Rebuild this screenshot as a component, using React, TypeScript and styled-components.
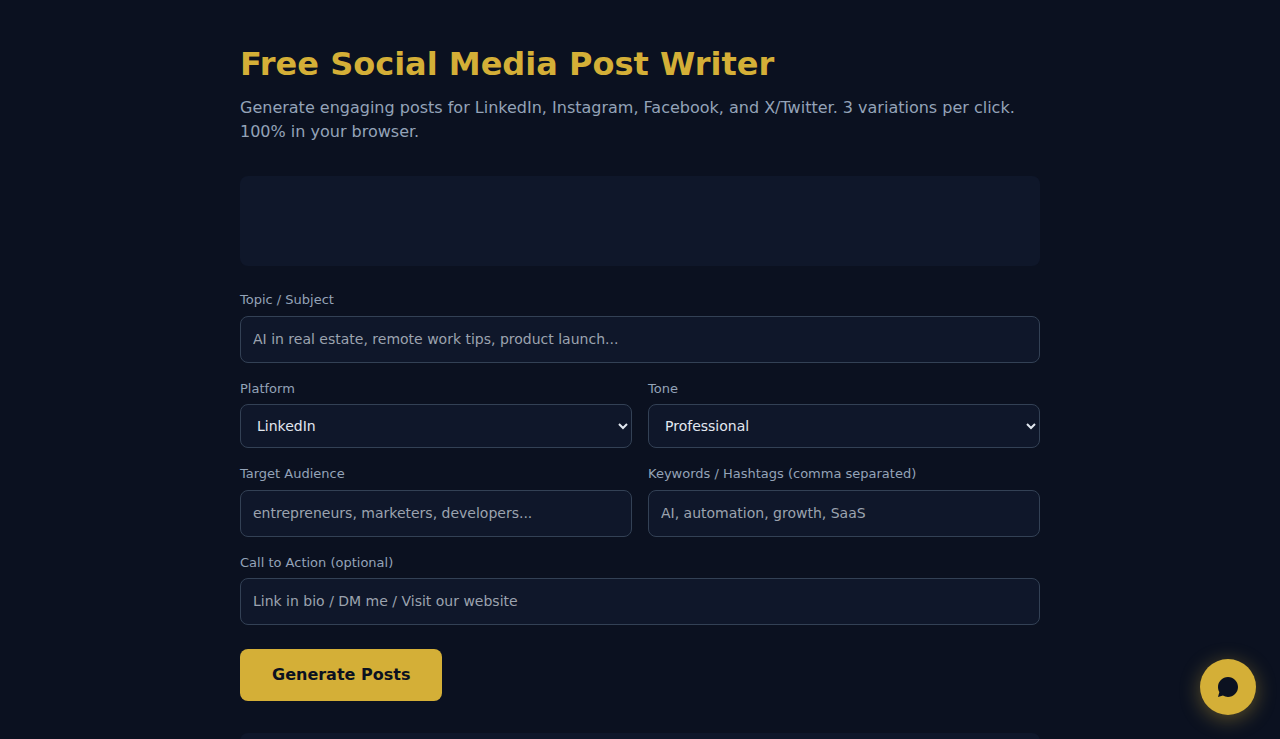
import React from "react";
import styled, { createGlobalStyle, css } from "styled-components";

const gold = "#d4af37";
const ink = "#0b1120";
const panel = "#0f172a";
const line = "#334155";
const muted = "#94a3b8";

const GlobalStyle = createGlobalStyle`
  *, *::before, *::after { box-sizing: border-box; }
  body {
    margin: 0;
    background: ${ink};
    color: #e2e8f0;
    font-family: "DejaVu Sans", sans-serif;
    font-size: 16px;
    line-height: 1.5;
  }
`;

const Page = styled.main`
  max-width: 848px;
  margin: 0 auto;
  padding: 40px 24px;
`;

const Title = styled.h1`
  margin: 0 0 8px;
  color: ${gold};
  font-size: 32px;
  font-weight: 700;
`;

const Intro = styled.p`
  margin: 0 0 32px;
  color: ${muted};
`;

const Banner = styled.aside`
  height: 90px;
  margin-bottom: 24px;
  border-radius: 8px;
  background: ${panel};
`;

const Form = styled.form`
  display: flex;
  flex-direction: column;
  gap: 16px;
`;

const Row = styled.div`
  display: grid;
  grid-template-columns: 1fr 1fr;
  gap: 16px;
`;

const FieldBox = styled.div`
  display: flex;
  flex-direction: column;
  gap: 6px;
`;

const Label = styled.label`
  color: ${muted};
  font-size: 13px;
`;

const control = css`
  width: 100%;
  padding: 12px;
  border: 1px solid ${line};
  border-radius: 8px;
  background: ${panel};
  color: #e2e8f0;
  font-family: inherit;
  font-size: 14px;
`;

const TextInput = styled.input`
  ${control}
  line-height: 1.5;

  &::placeholder {
    color: #9ca3af;
  }
`;

const Select = styled.select`
  ${control}
  height: 44px;
`;

const SubmitButton = styled.button`
  align-self: flex-start;
  margin-top: 8px;
  padding: 14px 32px;
  border: 0;
  border-radius: 8px;
  background: ${gold};
  color: ${ink};
  font-family: inherit;
  font-size: 16px;
  font-weight: 700;
  line-height: 1.5;
  cursor: pointer;
`;

const Results = styled.section`
  min-height: 90px;
  margin-top: 32px;
  border-radius: 8px;
  background: ${panel};
`;

const ChatButton = styled.button`
  position: fixed;
  right: 24px;
  bottom: 24px;
  display: flex;
  align-items: center;
  justify-content: center;
  width: 56px;
  height: 56px;
  padding: 0;
  border: 0;
  border-radius: 50%;
  background: ${gold};
  color: ${ink};
  box-shadow: 0 4px 20px rgba(212, 175, 55, 0.4);
  cursor: pointer;
`;

type TextFieldProps = { id: string; label: string; placeholder: string };

function TextField({ id, label, placeholder }: TextFieldProps) {
  return (
    <FieldBox>
      <Label htmlFor={id}>{label}</Label>
      <TextInput id={id} type="text" placeholder={placeholder} />
    </FieldBox>
  );
}

type SelectFieldProps = { id: string; label: string; options: string[] };

function SelectField({ id, label, options }: SelectFieldProps) {
  return (
    <FieldBox>
      <Label htmlFor={id}>{label}</Label>
      <Select id={id}>
        {options.map((option) => (
          <option key={option}>{option}</option>
        ))}
      </Select>
    </FieldBox>
  );
}

export default function App() {
  return (
    <>
      <GlobalStyle />
      <Page>
        <Title>Free Social Media Post Writer</Title>
        <Intro>
          Generate engaging posts for LinkedIn, Instagram, Facebook, and X/Twitter. 3 variations per
          click. 100% in your browser.
        </Intro>
        <Banner />
        <Form onSubmit={(event) => event.preventDefault()}>
          <TextField
            id="topic"
            label="Topic / Subject"
            placeholder="AI in real estate, remote work tips, product launch..."
          />
          <Row>
            <SelectField
              id="platform"
              label="Platform"
              options={["LinkedIn", "Instagram", "Facebook", "X/Twitter"]}
            />
            <SelectField id="tone" label="Tone" options={["Professional"]} />
          </Row>
          <Row>
            <TextField
              id="audience"
              label="Target Audience"
              placeholder="entrepreneurs, marketers, developers..."
            />
            <TextField
              id="keywords"
              label="Keywords / Hashtags (comma separated)"
              placeholder="AI, automation, growth, SaaS"
            />
          </Row>
          <TextField
            id="cta"
            label="Call to Action (optional)"
            placeholder="Link in bio / DM me / Visit our website"
          />
          <SubmitButton type="submit">Generate Posts</SubmitButton>
        </Form>
        <Results />
      </Page>
      <ChatButton type="button" aria-label="Open chat">
        <svg width="24" height="24" viewBox="0 0 24 24" fill="currentColor" aria-hidden="true">
          <path d="M12 2C6.48 2 2 6.48 2 12c0 1.85.5 3.58 1.38 5.06L2 22l4.94-1.38C8.42 21.5 10.15 22 12 22c5.52 0 10-4.48 10-10S17.52 2 12 2z" />
        </svg>
      </ChatButton>
    </>
  );
}
